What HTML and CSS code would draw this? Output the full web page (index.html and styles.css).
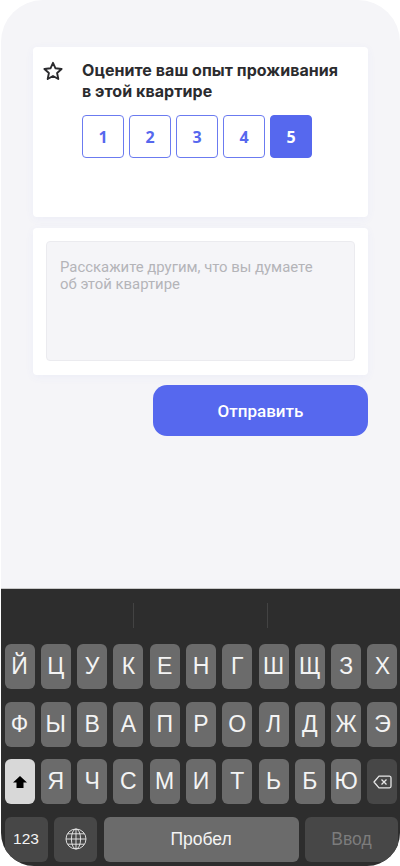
FILE: index.html
```html
<!DOCTYPE html>
<html lang="ru">
<head>
  <meta charset="UTF-8">
  <meta name="viewport" content="width=device-width, initial-scale=1.0">
  <title>Отзыв</title>
  <link rel="stylesheet" href="styles.css">
</head>
<body>
  <div class="phone">
    <div class="content">
      <div class="card rating-card">
        <svg class="star" width="20" height="20" viewBox="0 0 20 20">
          <path d="M10 1.8 L12.5 7.3 L18.6 8 L14.1 12 L15.3 18 L10 15 L4.7 18 L5.9 12 L1.4 8 L7.5 7.3 Z" fill="none" stroke="#2b2b2e" stroke-width="1.9" stroke-linejoin="round"/>
        </svg>
        <div class="rating-body">
          <h2>Оцените ваш опыт проживания в&nbsp;этой квартире</h2>
          <div class="scores">
            <button class="score">1</button>
            <button class="score">2</button>
            <button class="score">3</button>
            <button class="score">4</button>
            <button class="score active">5</button>
          </div>
        </div>
      </div>

      <div class="card comment-card">
        <div class="comment-box">Расскажите другим, что вы думаете об&nbsp;этой квартире</div>
      </div>

      <div class="footer">
        <button class="send">Отправить</button>
      </div>
    </div>

    <div class="keyboard">
      <div class="suggestions">
        <span class="divider"></span>
        <span class="divider"></span>
      </div>
      <div class="key-row">
        <span class="key">Й</span><span class="key">Ц</span><span class="key">У</span><span class="key">К</span><span class="key">Е</span><span class="key">Н</span><span class="key">Г</span><span class="key">Ш</span><span class="key">Щ</span><span class="key">З</span><span class="key">Х</span>
      </div>
      <div class="key-row">
        <span class="key">Ф</span><span class="key">Ы</span><span class="key">В</span><span class="key">А</span><span class="key">П</span><span class="key">Р</span><span class="key">О</span><span class="key">Л</span><span class="key">Д</span><span class="key">Ж</span><span class="key">Э</span>
      </div>
      <div class="key-row">
        <span class="key shift">
          <svg width="16" height="14" viewBox="0 0 16 14"><path d="M8 1 L15 7.5 H11.5 V13 H4.5 V7.5 H1 Z" fill="#000"/></svg>
        </span>
        <span class="key">Я</span><span class="key">Ч</span><span class="key">С</span><span class="key">М</span><span class="key">И</span><span class="key">Т</span><span class="key">Ь</span><span class="key">Б</span><span class="key">Ю</span>
        <span class="key dark">
          <svg width="19" height="14" viewBox="0 0 19 14" fill="none" stroke="#e8e8e8" stroke-width="1.3">
            <path d="M6 1.2 H16.5 A1.6 1.6 0 0 1 18 2.8 V11.2 A1.6 1.6 0 0 1 16.5 12.8 H6 L1 7 Z" stroke-linejoin="round"/>
            <path d="M8.5 4.5 L13.5 9.5 M13.5 4.5 L8.5 9.5"/>
          </svg>
        </span>
      </div>
      <div class="bottom-row">
        <span class="key dark num">123</span>
        <span class="key dark globe">
          <svg width="22" height="22" viewBox="0 0 22 22" fill="none" stroke="#ececec" stroke-width="0.9">
            <circle cx="11" cy="11" r="10"/>
            <ellipse cx="11" cy="11" rx="4.6" ry="10"/>
            <path d="M11 1 V21 M1 11 H21 M2.6 5.8 H19.4 M2.6 16.2 H19.4"/>
          </svg>
        </span>
        <span class="key space">Пробел</span>
        <span class="key dark enter">Ввод</span>
      </div>
    </div>
  </div>
</body>
</html>
```

FILE: styles.css
```css
* {
  box-sizing: border-box;
}

body {
  margin: 0;
  padding: 0;
  background: #fff;
  font-family: Inter, "Noto Sans", sans-serif;
}

.phone {
  margin-left: 1px;
  width: 399px;
  height: 866px;
  display: flex;
  flex-direction: column;
  background: #f5f5f8;
  border-radius: 42px 42px 33px 33px;
  overflow: hidden;
}

.content {
  flex: 1;
  padding: 47px 32px 0 32px;
}

.card {
  background: #fff;
  border-radius: 4px;
  box-shadow: 0 2px 10px rgba(86, 104, 238, 0.05);
}

.rating-card {
  height: 170px;
  display: flex;
  padding: 13px 10px;
}

.star {
  flex: none;
  margin-top: 1px;
}

.rating-body {
  margin-left: 19px;
}

h2 {
  margin: 0;
  font-size: 16px;
  line-height: 21px;
  font-weight: 700;
  letter-spacing: 0.05px;
  color: #2b2b2e;
  width: 272px;
}

.scores {
  display: flex;
  gap: 5px;
  margin-top: 13px;
}

.score {
  width: 42px;
  height: 43px;
  padding: 0;
  border: 1px solid #6b7bf0;
  border-radius: 4px;
  background: #fff;
  color: #5668ee;
  font-family: "Open Sans", sans-serif;
  font-size: 16px;
  font-weight: 700;
}

.score.active {
  background: #5668ee;
  border-color: #5668ee;
  color: #fff;
}

.comment-card {
  height: 147px;
  margin-top: 11px;
  padding: 13px;
}

.comment-box {
  height: 120px;
  padding: 17px 13px;
  background: #f5f5f8;
  border: 1px solid #ebebef;
  border-radius: 4px;
  font-family: Roboto, sans-serif;
  font-size: 14.9px;
  line-height: 17px;
  color: #b4b4b8;
}

.footer {
  display: flex;
  justify-content: flex-end;
  margin-top: 10px;
}

.send {
  width: 215px;
  height: 51px;
  border: 0;
  border-radius: 14px;
  background: #5668ee;
  color: #fff;
  font-family: Roboto, sans-serif;
  font-size: 17px;
  font-weight: 500;
}

.keyboard {
  height: 278px;
  padding: 0 1px 0 3.5px;
  background: #2d2d2d;
  border-top: 1px solid #c9c9c9;
  font-family: "Liberation Sans", Arial, sans-serif;
}

.suggestions {
  height: 55px;
  display: flex;
  justify-content: center;
  gap: 133px;
  padding-top: 14px;
  margin-left: -2px;
}

.divider {
  width: 1px;
  height: 25px;
  background: #434343;
}

.key-row {
  display: grid;
  grid-template-columns: repeat(11, 30px);
  column-gap: 6.3px;
  margin-bottom: 12.5px;
}

.key {
  height: 45px;
  display: flex;
  align-items: center;
  justify-content: center;
  border-radius: 6px;
  background: #6b6b6b;
  color: #f4f4f4;
  font-size: 23px;
}

.key.dark {
  background: #474747;
}

.key.shift {
  background: #d8d8d8;
}

.bottom-row {
  display: flex;
  gap: 6.5px;
}

.bottom-row .key {
  font-size: 17.5px;
}

.bottom-row .num {
  width: 43px;
  font-size: 15.5px;
}

.globe {
  width: 43px;
}

.space {
  width: 195px;
}

.bottom-row .enter {
  width: 93px;
  color: #7c7c7c;
}
```
